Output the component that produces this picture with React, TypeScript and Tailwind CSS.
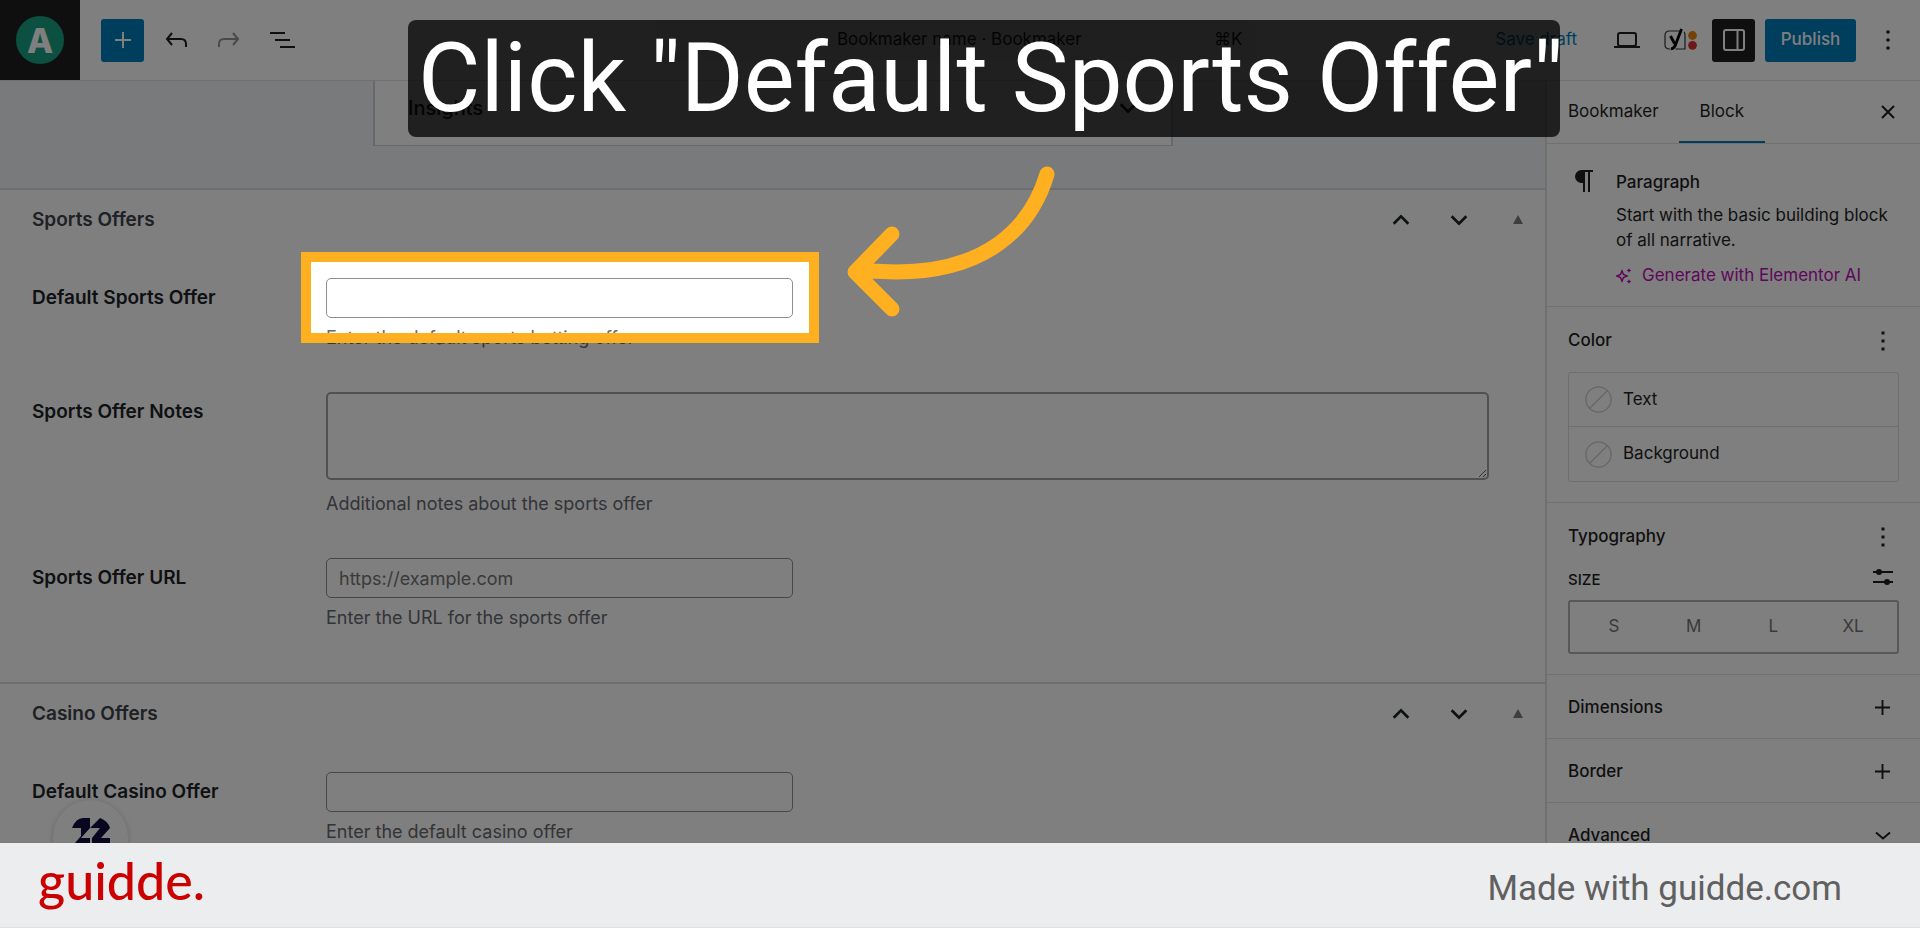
import { useId, type ReactNode } from "react"

const chevronUp = "M4 16 L12 8 L20 16"
const chevronDown = "M4 8 L12 16 L20 8"

function Dots({ square = false }: { square?: boolean }) {
  return (
    <svg width="24" height="24" viewBox="0 0 24 24" fill="currentColor">
      {[4, 12, 20].map((y) =>
        square ? (
          <rect key={y} x="10.5" y={y - 1.5} width="3" height="3" />
        ) : (
          <circle key={y} cx="12" cy={y} r="1.8" />
        )
      )}
    </svg>
  )
}

function Plus({ size = 18, stroke = 2 }: { size?: number; stroke?: number }) {
  return (
    <svg width={size} height={size} viewBox="0 0 18 18" stroke="currentColor" strokeWidth={stroke}>
      <path d="M9 1v16M1 9h16" />
    </svg>
  )
}

function Chevron({ d }: { d: string }) {
  return (
    <svg width="22" height="22" viewBox="0 0 24 24" fill="none" stroke="currentColor" strokeWidth="3">
      <path d={d} />
    </svg>
  )
}

function Toolbar() {
  return (
    <header className="flex h-[81px] shrink-0 items-center border-b border-[#e0e0e0] bg-white">
      <div className="flex flex-1 items-center gap-[21px]">
        <a href="#" aria-label="View posts" className="flex size-20 shrink-0 items-center justify-center bg-[#1e1e1e]">
          <span className="flex size-12 items-center justify-center rounded-full bg-[#16a183] text-[34px] font-extrabold text-white">
            A
          </span>
        </a>
        <div className="flex items-center gap-[10px] text-[#1e1e1e]">
          <button aria-label="Add block" className="flex size-[43px] items-center justify-center rounded-[3px] bg-[#007cba] text-white">
            <Plus size={18} />
          </button>
          <button aria-label="Undo" className="flex size-[43px] items-center justify-center">
            <svg width="24" height="24" viewBox="0 0 24 24" fill="none" stroke="currentColor" strokeWidth="2">
              <path d="M8 5 L3 11 L8 17 M3 11 H17 Q22 11 22 16 V19" />
            </svg>
          </button>
          <button aria-label="Redo" className="flex size-[43px] items-center justify-center text-[#949494]">
            <svg width="24" height="24" viewBox="0 0 24 24" fill="none" stroke="currentColor" strokeWidth="2">
              <path d="M16 5 L21 11 L16 17 M21 11 H7 Q2 11 2 16 V19" />
            </svg>
          </button>
          <button aria-label="Document overview" className="flex size-[43px] items-center justify-center">
            <svg width="26" height="20" viewBox="0 0 26 20" stroke="currentColor" strokeWidth="2">
              <path d="M1 3h15M6 10h15M11 17h15" />
            </svg>
          </button>
        </div>
      </div>

      <button className="flex h-[43px] w-[600px] items-center rounded-[4px] bg-[#fcfcfc] pr-3 pl-[50px] text-[17px] text-[#1e1e1e]">
        <span className="flex-1 text-center">Bookmaker name · Bookmaker</span>
        <span>⌘K</span>
      </button>

      <div className="flex flex-1 items-center justify-end pr-[11px]">
        <button className="mr-7 text-[17px] whitespace-nowrap text-[#007cba]">Save draft</button>
        <button aria-label="Preview" className="flex size-[43px] items-center justify-center text-[#1e1e1e]">
          <svg width="26" height="18" viewBox="0 0 26 18" fill="none" stroke="currentColor" strokeWidth="2">
            <rect x="4" y="2" width="18" height="13" rx="2" />
            <path d="M0 16h26" />
          </svg>
        </button>
        <button aria-label="Yoast SEO" className="mr-[11px] ml-[10px] flex size-[43px] items-center justify-center">
          <svg width="34" height="24" viewBox="0 0 34 24" fill="none">
            <path d="M16 3H6.500Q2 3 2 7.500V16.500Q2 21 6.500 21H7.500M12.500 21H22V7Q22 5 21 4" stroke="#333" strokeWidth="1.200" />
            <path d="M7.500 8 L11.500 15.500 M18.500 1 L13 15.500 Q11.500 20.500 8 20.800" stroke="#000" strokeWidth="2.800" />
            <circle cx="29.500" cy="7.500" r="4.400" fill="#e8820f" />
            <circle cx="29.500" cy="17.300" r="4.400" fill="#dc3232" />
          </svg>
        </button>
        <button aria-label="Settings" className="mr-[10px] flex size-[43px] items-center justify-center rounded-[3px] bg-[#1e1e1e] text-white">
          <svg width="22" height="22" viewBox="0 0 22 22" fill="none" stroke="currentColor" strokeWidth="2">
            <rect x="1" y="1" width="20" height="20" rx="2" />
            <path d="M14.500 1v20" />
          </svg>
        </button>
        <button className="h-[43px] w-[91px] rounded-[3px] bg-[#007cba] text-[17px] font-medium text-white">Publish</button>
        <button aria-label="Options" className="ml-[10px] flex w-[43px] items-center justify-center text-[#1e1e1e]">
          <Dots />
        </button>
      </div>
    </header>
  )
}

function MetaBox({ title, children }: { title: string; children: ReactNode }) {
  return (
    <section className="border-t-2 border-[#dcdcde] bg-white pb-[52px]">
      <div className="flex h-[60px] items-center pr-[17px] pl-8">
        <h2 className="flex-1 text-[19px] font-semibold text-[#3c434a]">{title}</h2>
        <div className="flex items-center text-[#1d2327]">
          <button aria-label={`Move ${title} up`} className="flex w-[58px] justify-center">
            <Chevron d={chevronUp} />
          </button>
          <button aria-label={`Move ${title} down`} className="flex w-[58px] justify-center">
            <Chevron d={chevronDown} />
          </button>
          <button aria-label={`Toggle ${title}`} className="flex w-10 justify-end pr-1 text-[#787c82]">
            <svg width="12" height="10" viewBox="0 0 12 10" fill="currentColor">
              <path d="M6 0 L11 9 H1Z" />
            </svg>
          </button>
        </div>
      </div>
      <div className="flex flex-col gap-[42px] pt-7 pr-[56px] pl-8">{children}</div>
    </section>
  )
}

interface FieldProps {
  label: string
  help: string
  placeholder?: string
  multiline?: boolean
}

function Field({ label, help, placeholder, multiline }: FieldProps) {
  const id = useId()
  return (
    <div className="flex">
      <label htmlFor={id} className="w-[294px] shrink-0 pt-2 text-[19px] leading-6 font-semibold text-[#1d2327]">
        {label}
      </label>
      <div className="flex-1">
        {multiline ? (
          <textarea id={id} className="mb-[12px] block h-[88px] w-full rounded-[5px] border-2 border-[#a0a3a7] bg-white" />
        ) : (
          <input
            id={id}
            type="text"
            placeholder={placeholder}
            className="block h-10 w-[467px] rounded-[5px] border border-[#8c8f94] bg-white px-3 text-[18px] placeholder:text-[#757575]"
          />
        )}
        <p className="mt-[8px] text-[18px] leading-6 text-[#646970]">{help}</p>
      </div>
    </div>
  )
}

function Swatch({ label }: { label: string }) {
  return (
    <button className="flex h-[54px] w-full items-center gap-[11px] px-4 text-[17px]">
      <svg width="27" height="27" viewBox="0 0 27 27" fill="none" stroke="#cccccc" strokeWidth="1.300">
        <circle cx="13.500" cy="13.500" r="12.600" />
        <path d="M4.500 22.500 L22.500 4.500" />
      </svg>
      {label}
    </button>
  )
}

function PanelHeading({ title }: { title: string }) {
  return (
    <div className="flex h-[65px] items-center justify-between pt-[2px] pr-1">
      <h2 className="text-[17px] font-medium">{title}</h2>
      <button aria-label={`${title} options`}>
        <Dots square />
      </button>
    </div>
  )
}

function PanelRow({ title, children }: { title: string; children: ReactNode }) {
  return (
    <button className="flex h-16 w-full items-center justify-between border-t border-[#e0e0e0] pt-[2px] pr-[29px] pl-[21px] text-[17px] font-medium">
      {title}
      {children}
    </button>
  )
}

function Sidebar() {
  return (
    <aside className="w-[375px] shrink-0 border-l-2 border-[#e0e0e0] bg-white text-[#1e1e1e]">
      <div className="flex h-[63px] items-stretch border-b border-[#e0e0e0] text-[17px]">
        <button className="pr-5 pl-[21px]">Bookmaker</button>
        <button className="border-b-2 border-[#007cba] px-[21px] pt-[2px]">Block</button>
        <button aria-label="Close settings" className="ml-auto px-6">
          <svg width="16" height="16" viewBox="0 0 16 16" stroke="currentColor" strokeWidth="2">
            <path d="M2 2l12 12M14 2L2 14" />
          </svg>
        </button>
      </div>

      <div className="flex h-[162px] pt-[26px] pl-[28px]">
        <svg width="18" height="22" viewBox="0 0 18 22" fill="currentColor" className="mr-[23px] shrink-0">
          <path d="M6.500 0 H18 V2 H15 V22 H13 V2 H10 V22 H8 V13 H6.500 A6.500 6.500 0 0 1 6.500 0Z" />
        </svg>
        <div className="text-[17px] leading-[25px]">
          <h2 className="mb-2 font-medium">Paragraph</h2>
          <p>
            Start with the basic building block
            <br />
            of all narrative.
          </p>
          <button className="mt-[10px] flex items-center gap-[10px] text-[#c00bb9]">
            <svg width="16" height="16" viewBox="0 0 16 16" fill="currentColor">
              <path d="M6 3 L7.500 6.500 L11 8 L7.500 9.500 L6 13 L4.500 9.500 L1 8 L4.500 6.500Z" fill="none" stroke="currentColor" strokeWidth="1.500" />
              <path d="M13 0l.8 1.700 1.700.8-1.700.8L13 5l-.8-1.700-1.700-.8 1.700-.8zM13 11l.8 1.700 1.700.8-1.700.8L13 16l-.8-1.700-1.700-.8 1.700-.8z" />
            </svg>
            Generate with Elementor AI
          </button>
        </div>
      </div>

      <div className="border-t border-[#e0e0e0] pr-[21px] pb-5 pl-[21px]">
        <PanelHeading title="Color" />
        <div className="divide-y divide-[#dddddd] rounded-[3px] border border-[#dddddd]">
          <Swatch label="Text" />
          <Swatch label="Background" />
        </div>
      </div>

      <div className="border-t border-[#e0e0e0] pr-[21px] pb-5 pl-[21px]">
        <PanelHeading title="Typography" />
        <div className="flex h-8 items-start justify-between pr-[6px]">
          <h3 className="text-[15px] leading-6 font-medium">SIZE</h3>
          <button aria-label="Set custom size">
            <svg width="20" height="18" viewBox="0 0 20 18" fill="currentColor">
              <path d="M0 3h20v2H0zM0 13h20v2H0z" />
              <circle cx="6" cy="4" r="3" />
              <circle cx="14" cy="14" r="3" />
            </svg>
          </button>
        </div>
        <div className="grid h-[54px] grid-cols-4 rounded-[3px] border-2 border-[#b0b0b0] px-1 text-[17px] text-[#757575]">
          {["S", "M", "L", "XL"].map((size) => (
            <button key={size}>{size}</button>
          ))}
        </div>
      </div>

      <PanelRow title="Dimensions">
        <Plus size={17} />
      </PanelRow>
      <PanelRow title="Border">
        <Plus size={17} />
      </PanelRow>
      <PanelRow title="Advanced">
        <svg width="16" height="10" viewBox="0 0 16 10" fill="none" stroke="currentColor" strokeWidth="2">
          <path d="M1 1.500 L8 7.500 L15 1.500" />
        </svg>
      </PanelRow>
    </aside>
  )
}

export default function App() {
  return (
    <div className="flex h-screen flex-col overflow-hidden font-[Inter,'Liberation_Sans',sans-serif]">
      <main className="relative flex min-h-0 flex-1 flex-col overflow-hidden">
        <Toolbar />
        <div className="flex min-h-0 flex-1">
          <div className="min-w-0 flex-1">
            {/* Editor canvas, scrolled to its last block */}
            <div className="h-[107px] bg-[#f3f5f9] pr-[372px] pl-[373px]">
              <div className="flex h-[65px] items-center justify-between border-x-2 border-b border-[#ccd0d4] bg-white pr-8 pb-[10px] pl-[33px] text-[20px] font-medium text-[#1e1e1e]">
                Insights
                <Chevron d={chevronDown} />
              </div>
            </div>
            <MetaBox title="Sports Offers">
              <Field label="Default Sports Offer" help="Enter the default sports betting offer" />
              <Field label="Sports Offer Notes" help="Additional notes about the sports offer" multiline />
              <Field label="Sports Offer URL" help="Enter the URL for the sports offer" placeholder="https://example.com" />
            </MetaBox>
            <MetaBox title="Casino Offers">
              <Field label="Default Casino Offer" help="Enter the default casino offer" />
            </MetaBox>
          </div>
          <Sidebar />
        </div>

        {/* Floating help button */}
        <button
          aria-label="Help"
          className="absolute -bottom-8 left-[53px] flex size-[75px] items-start justify-center rounded-full bg-white pt-[18px] shadow-[0_1px_6px_rgba(0,0,0,0.2)]"
        >
          <svg width="38" height="38" viewBox="0 0 38 38" fill="#130f40">
            <path d="M0 10 Q4 0 11 0 H18 V10 L28 0 Q36 3 38 10 L29 20 H38 V25 H20 V20 L28 10 H18 L9 20 H18 V25 H3 L9 18 V10Z" />
          </svg>
        </button>

        {/* Spotlight around the highlighted field, dims the rest */}
        <div className="pointer-events-none absolute top-[252px] left-[301px] h-[91px] w-[518px] border-10 border-[#ffb020] shadow-[0_0_0_2000px_rgba(0,0,0,0.5)]" />

        <svg width="230" height="170" viewBox="840 156 230 170" fill="none" stroke="#ffb020" strokeWidth="15" strokeLinecap="round" strokeLinejoin="round" className="pointer-events-none absolute top-[156px] left-[840px]">
          <path d="M1047 174 C1031 228 986 272 896 272 L870 271 M892 234 L855 272 L892 309" />
        </svg>

        <div className="absolute top-5 left-[408px] w-[1152px] rounded-lg bg-black/75 pl-[10px] font-[Roboto,sans-serif] text-[96px] leading-[117px] whitespace-nowrap text-white">
          Click "Default Sports Offer"
        </div>
      </main>

      <footer className="flex h-[85px] shrink-0 items-center justify-between border-b border-[#e0e0e0] bg-[#ecedef] pr-[78px] pl-[38px]">
        <a href="#" className="pb-[10px] font-[Lato,sans-serif] text-[52px] leading-[60px] font-medium text-[#cb0000]">
          guidde.
        </a>
        <p className="pt-2 font-[Roboto,sans-serif] text-[35px] leading-[42px] text-[#606060]">Made with guidde.com</p>
      </footer>
    </div>
  )
}
